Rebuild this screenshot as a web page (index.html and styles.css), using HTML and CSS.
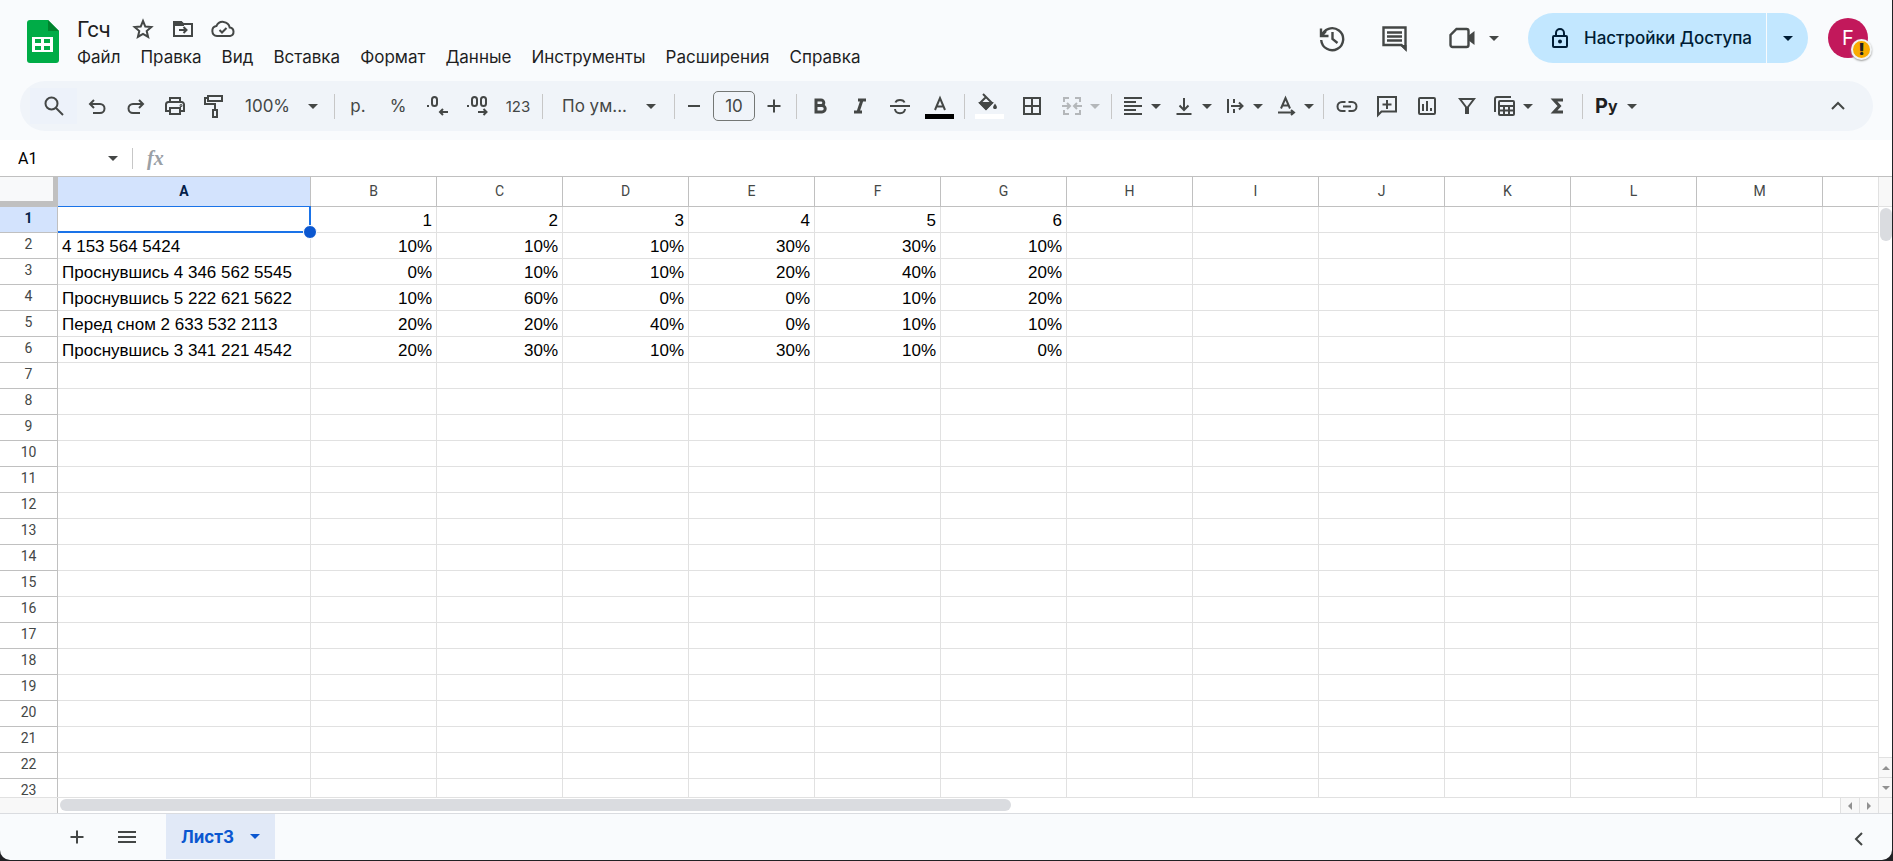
FILE: index.html
```html
<!DOCTYPE html>
<html lang="ru">
<head>
    <meta charset="UTF-8">
    <meta name="viewport" content="width=device-width, initial-scale=1.0">
    <title>Гсч</title>
    <link rel="stylesheet" href="styles.css">
</head>
<body>

    <div class="app">

        <header class="header">
            <svg class="logo" viewBox="0 0 32 43">
                <path d="M3 0h18l11 11v29a3 3 0 0 1-3 3H3a3 3 0 0 1-3-3V3a3 3 0 0 1 3-3z" fill="#00ac47"/>
                <path d="M21 0l11 11H21z" fill="#00832d"/>
                <path d="M5 17h21v15H5zM8 19v4h6v-4zM17 19v4h6v-4zM8 26v4h6v-4zM17 26v4h6v-4z" fill="#fff" fill-rule="evenodd"/>
            </svg>

            <div class="doc">
                <div class="doc-title">
                    <input class="title" type="text" value="Гсч" aria-label="Название">
                    <button class="mini" aria-label="Добавить в помеченные">
                        <svg class="icon" viewBox="0 0 24 24"><path d="M12 4l2.3 5.6 6 .5-4.600 3.900 1.400 5.900L12 16.800l-5.100 3.100 1.400-5.900-4.600-3.900 6-.5z"/></svg>
                    </button>
                    <button class="mini" aria-label="Переместить">
                        <svg class="icon" viewBox="0 0 24 24"><path d="M3 5v14h18V7h-9l-2-2z"/><path d="M3 5h7l2 2v1H3z" fill="currentColor"/><path d="M8 13h7M12.500 10l3 3-3 3"/></svg>
                    </button>
                    <button class="mini" aria-label="Статус документа">
                        <svg class="icon icon-cloud" viewBox="0 0 26 24"><path d="M7 19a5 5 0 0 1-.6-9.900A7 7 0 0 1 19.700 10.500 4.300 4.300 0 0 1 20 19z"/><path d="M9.500 13l2.500 2.500 4.500-4.500"/></svg>
                    </button>
                </div>
                <nav class="menu">
                    <button>Файл</button>
                    <button>Правка</button>
                    <button>Вид</button>
                    <button>Вставка</button>
                    <button>Формат</button>
                    <button>Данные</button>
                    <button>Инструменты</button>
                    <button>Расширения</button>
                    <button>Справка</button>
                </nav>
            </div>

            <div class="actions">
                <button class="action" aria-label="История версий">
                    <svg class="icon icon-big" viewBox="0 0 30 30"><path d="M4.500 13.500A11 11 0 1 1 4.200 17M4 5.500v7.500h7.500M5 12.500L9 8M15.500 9v7l5 4"/></svg>
                </button>
                <button class="action" aria-label="Комментарии">
                    <svg class="icon icon-big" viewBox="0 0 30 30"><path d="M4.500 4.500h22V26l-4-4h-18z"/><path d="M27.500 28l-7-6h7z" fill="currentColor" stroke="none"/><path d="M8 9.500h15M8 13.500h15M8 17.500h15"/></svg>
                </button>
                <button class="action action-meet" aria-label="Видеовстреча">
                    <svg class="icon icon-big" viewBox="0 0 30 30"><path d="M9.500 6h10a2 2 0 0 1 2 2v14a2 2 0 0 1-2 2h-14a2 2 0 0 1-2-2V12z"/><path d="M21 13l6.500-5v14L21 17z" fill="currentColor" stroke="none"/></svg>
                    <span class="caret"></span>
                </button>
                <div class="share">
                    <button class="share-main">
                        <svg class="icon" viewBox="0 0 24 24"><rect x="5" y="10" width="14" height="11" rx="1"/><path d="M8 10V7a4 4 0 0 1 8 0v3"/><circle cx="12" cy="15.500" r="1" fill="currentColor"/></svg>
                        Настройки Доступа
                    </button>
                    <button class="share-more" aria-label="Быстрый доступ"><span class="caret"></span></button>
                </div>
                <button class="avatar" aria-label="Аккаунт">F<span class="badge">!</span></button>
            </div>
        </header>

        <div class="toolbar">
            <button class="tool tool-search" aria-label="Поиск">
                <svg class="icon" viewBox="0 0 24 24"><circle cx="9.500" cy="9.500" r="6"/><path d="M14 14l7 7"/></svg>
            </button>
            <button class="tool tool-narrow" aria-label="Отменить">
                <svg class="icon" viewBox="0 0 24 24"><path d="M8 19h7a4.500 4.500 0 0 0 0-9H5M9 6l-4 4 4 4"/></svg>
            </button>
            <button class="tool tool-narrow" aria-label="Повторить">
                <svg class="icon" viewBox="0 0 24 24"><path d="M16 19H9a4.500 4.500 0 0 1 0-9h10M15 6l4 4-4 4"/></svg>
            </button>
            <button class="tool tool-narrow" aria-label="Печать">
                <svg class="icon" viewBox="0 0 24 24"><path d="M7 8V4h10v4M7 17H3v-6.500A2.500 2.500 0 0 1 5.500 8h13a2.500 2.500 0 0 1 2.500 2.500V17h-4"/><path d="M7 14h10v6H7z"/><circle cx="18" cy="11.500" r=".5"/></svg>
            </button>
            <button class="tool tool-narrow" aria-label="Копировать форматирование">
                <svg class="icon" viewBox="0 0 24 24"><path d="M6 2h14v5H6zM6 4H3v6h10v5M11 16h4v7h-4z"/></svg>
            </button>
            <label class="picker picker-zoom">
                <select aria-label="Масштаб"><option>100%</option></select>
                <span class="caret"></span>
            </label>
            <span class="divider"></span>
            <button class="tool">р.</button>
            <button class="tool">%</button>
            <button class="tool" aria-label="Уменьшить число знаков">
                <svg class="icon" viewBox="0 0 24 24"><rect x="6" y="3" width="5" height="9" rx="2.500"/><path d="M1 12h2M22 18h-8M17 15l-3 3 3 3"/></svg>
            </button>
            <button class="tool" aria-label="Увеличить число знаков">
                <svg class="icon" viewBox="0 0 24 24"><rect x="6" y="3" width="5" height="9" rx="2.500"/><rect x="15" y="3" width="5" height="9" rx="2.500"/><path d="M1 12h2M12 18h8M17.500 15l3 3-3 3"/></svg>
            </button>
            <button class="tool tool-small">123</button>
            <span class="divider"></span>
            <label class="picker picker-font">
                <select aria-label="Шрифт"><option>По ум...</option></select>
                <span class="caret"></span>
            </label>
            <span class="divider"></span>
            <div class="size-group">
                <button class="tool tool-step" aria-label="Уменьшить размер шрифта">
                    <svg class="icon" viewBox="0 0 24 24"><path d="M6 12h12"/></svg>
                </button>
                <input class="size" type="text" value="10" aria-label="Размер шрифта">
                <button class="tool tool-step" aria-label="Увеличить размер шрифта">
                    <svg class="icon" viewBox="0 0 24 24"><path d="M5.500 12h13M12 5.500v13"/></svg>
                </button>
            </div>
            <span class="divider"></span>
            <button class="tool" aria-label="Полужирный">
                <svg class="icon icon-bold" viewBox="0 0 24 24"><path d="M8 6h5a2.800 2.800 0 0 1 0 5.600H8zM8 11.600h6a3.200 3.200 0 0 1 0 6.400H8z"/></svg>
            </button>
            <button class="tool" aria-label="Курсив">
                <svg class="icon icon-bold" viewBox="0 0 24 24"><path d="M10 6h8M6 18h8M14 6l-4 12"/></svg>
            </button>
            <button class="tool" aria-label="Зачеркнутый">
                <svg class="icon" viewBox="0 0 24 24"><path d="M2 12h20M16.500 8.500C15.500 5 8.500 5 7.500 8.500M7 15c.5 5.500 9.500 5.500 10 0"/></svg>
            </button>
            <button class="tool" aria-label="Цвет текста">
                <svg class="icon icon-color" viewBox="0 0 30 30"><path d="M10 19L15 7l5 12M11.500 15.500h7"/><path d="M0 25.500h29" stroke="#000" stroke-width="5"/></svg>
            </button>
            <span class="divider"></span>
            <div class="cell-group">
                <button class="tool" aria-label="Цвет заливки">
                    <svg class="icon icon-color" viewBox="0 0 30 30"><path d="M8 3l9 9-6 6-6-6 6-6"/><path d="M5.500 12h11L11 17.500z" fill="currentColor"/><path d="M20 12.500c3 4 2 5.500 0 5.500s-3-1.500 0-5.500z" fill="currentColor" stroke="none"/><path d="M0 25.500h29" stroke="#fff" stroke-width="5"/></svg>
                </button>
                <button class="tool" aria-label="Границы">
                    <svg class="icon" viewBox="0 0 24 24"><path d="M4 4h16v16H4zM12 4v16M4 12h16"/></svg>
                </button>
                <button class="tool-split" aria-label="Объединить ячейки" disabled>
                    <svg class="icon" viewBox="0 0 24 24"><path d="M9 4H4v4M4 16v4h5M15 4h5v4M20 16v4h-5M2 12h7M7 9l3 3-3 3M22 12h-7M17 9l-3 3 3 3"/></svg>
                    <span class="caret"></span>
                </button>
            </div>
            <span class="divider"></span>
            <button class="tool-split" aria-label="Выравнивание по горизонтали">
                <svg class="icon" viewBox="0 0 24 24"><path d="M3 4h18M3 8h12M3 12h18M3 16h12M3 20h18"/></svg>
                <span class="caret"></span>
            </button>
            <button class="tool-split" aria-label="Выравнивание по вертикали">
                <svg class="icon" viewBox="0 0 24 24"><path d="M12 4v12M7.500 11.500L12 16l4.500-4.500M4.500 20h15"/></svg>
                <span class="caret"></span>
            </button>
            <button class="tool-split" aria-label="Перенос текста">
                <svg class="icon" viewBox="0 0 24 24"><path d="M5 5v14M11 5v4M11 15v4M8 12h11M16 8.500l3.500 3.500-3.500 3.500"/></svg>
                <span class="caret"></span>
            </button>
            <button class="tool-split" aria-label="Поворот текста">
                <svg class="icon" viewBox="0 0 24 24"><path d="M7 14.500L11.500 4 16 14.500M8.500 11.500h6M4 18.500h15M17 16l3 2.500-3 2.500"/></svg>
                <span class="caret"></span>
            </button>
            <span class="divider"></span>
            <button class="tool" aria-label="Вставить ссылку">
                <svg class="icon" viewBox="0 0 24 24"><path d="M10.500 8H7a4.500 4.500 0 0 0 0 9h3.500M13.500 8H17a4.500 4.500 0 0 1 0 9h-3.500M8 12.500h8"/></svg>
            </button>
            <button class="tool" aria-label="Вставить комментарий">
                <svg class="icon" viewBox="0 0 24 24"><path d="M3 21V3h18v14.500H6.500zM12 6v9M7.500 10.500h9"/></svg>
            </button>
            <button class="tool" aria-label="Вставить диаграмму">
                <svg class="icon" viewBox="0 0 24 24"><rect x="4" y="4" width="16" height="16" rx="1"/><path d="M8 10v7M12 7v10M16 14v3"/></svg>
            </button>
            <button class="tool" aria-label="Создать фильтр">
                <svg class="icon" viewBox="0 0 24 24"><path d="M5 5h14l-6 8v6h-2v-6z"/></svg>
            </button>
            <button class="tool-split" aria-label="Представление таблицы">
                <svg class="icon" viewBox="0 0 24 24"><path d="M2 18V5a2 2 0 0 1 2-2h14"/><rect x="6" y="7" width="15" height="14" rx="1"/><path d="M6 12h15M6 16.500h15M11 12v9M16 12v9"/></svg>
                <span class="caret"></span>
            </button>
            <button class="tool" aria-label="Функции">
                <svg class="icon icon-bold" viewBox="0 0 24 24"><path d="M17 6H8l5.500 6L8 18h9"/></svg>
            </button>
            <span class="divider"></span>
            <button class="tool-split tool-py" aria-label="Python">
                <b>P</b><b class="py-y">y</b>
                <span class="caret"></span>
            </button>
            <button class="tool tool-collapse" aria-label="Скрыть меню">
                <svg class="icon" viewBox="0 0 24 24"><path d="M6 15l6-6 6 6"/></svg>
            </button>
        </div>

        <div class="formula-bar">
            <input class="name-box" type="text" value="A1" aria-label="Диапазон">
            <span class="caret"></span>
            <span class="formula-divider"></span>
            <label class="fx" for="formula">fx</label>
            <input id="formula" class="formula" type="text">
        </div>

        <div class="sheet">
            <div class="viewport">
                <table class="grid">
                    <thead>
                        <tr id="columns"><th class="corner"></th></tr>
                    </thead>
                    <tbody id="rows">
                        <!-- Строки добавляет скрипт -->
                    </tbody>
                </table>
            </div>
            <div class="scroll-y">
                <div class="scroll-head"></div>
                <div class="thumb-y"></div>
                <button class="scroll-button" aria-label="Вверх"><span class="arrow arrow-up"></span></button>
                <button class="scroll-button" aria-label="Вниз"><span class="arrow arrow-down"></span></button>
            </div>
            <div class="scroll-x">
                <div class="scroll-left"></div>
                <div class="track-x"><div class="thumb-x"></div></div>
                <button class="scroll-button" aria-label="Влево"><span class="arrow arrow-left"></span></button>
                <button class="scroll-button" aria-label="Вправо"><span class="arrow arrow-right"></span></button>
            </div>
            <div class="scroll-corner"></div>
        </div>

        <footer class="tabs">
            <button class="tab-button" aria-label="Добавить лист">
                <svg class="icon" viewBox="0 0 24 24"><path d="M5.500 12h13M12 5.500v13"/></svg>
            </button>
            <button class="tab-button" aria-label="Все листы">
                <svg class="icon" viewBox="0 0 24 24"><path d="M3 7h18M3 12h18M3 17h18"/></svg>
            </button>
            <button class="tab">Лист3 <span class="caret"></span></button>
            <button class="tab-button tab-panel" aria-label="Показать боковую панель">
                <svg class="icon" viewBox="0 0 24 24"><path d="M15 8l-6 6 6 6"/></svg>
            </button>
        </footer>

    </div>

    <script>

        const columns = document.getElementById("columns");
        const rows = document.getElementById("rows");

        const letters = ["A", "B", "C", "D", "E", "F", "G", "H", "I", "J", "K", "L", "M", ""];
        const data = [
            ["", "1", "2", "3", "4", "5", "6"],
            ["4 153 564 5424", "10%", "10%", "10%", "30%", "30%", "10%"],
            ["Проснувшись 4 346 562 5545", "0%", "10%", "10%", "20%", "40%", "20%"],
            ["Проснувшись 5 222 621 5622", "10%", "60%", "0%", "0%", "10%", "20%"],
            ["Перед сном 2 633 532 2113", "20%", "20%", "40%", "0%", "10%", "10%"],
            ["Проснувшись 3 341 221 4542", "20%", "30%", "10%", "30%", "10%", "0%"]
        ];

        for( var letter of letters ) {
            const th = document.createElement("th");
            th.textContent = letter;
            columns.appendChild(th);
        }
        columns.children[1].className = "col-a selected";
        columns.lastChild.className = "col-rest";

        for( var r = 0; r < 23; r++ ) {
            const tr = document.createElement("tr");
            const th = document.createElement("th");
            th.textContent = r + 1;
            tr.appendChild(th);

            for( var c = 0; c < letters.length; c++ ) {
                const td = document.createElement("td");
                td.textContent = data[r] && data[r][c] ? data[r][c] : "";
                tr.appendChild(td);
            }
            rows.appendChild(tr);
        }

        // Активная ячейка A1
        rows.rows[0].cells[0].className = "selected";
        rows.rows[0].cells[1].className = "active";

    </script>

</body>
</html>
```
FILE: styles.css
```css
* {
    box-sizing: border-box;
}

body {
    margin: 0;
    background-color: #202124;
    font-family: Inter, Roboto, sans-serif;
    color: #1f1f1f;
}

button, input, select {
    margin: 0;
    padding: 0;
    border: none;
    background: none;
    font: inherit;
    color: inherit;
}

button {
    display: flex;
    align-items: center;
    justify-content: center;
    flex-shrink: 0;
}

.app {
    display: flex;
    flex-direction: column;
    height: calc(100vh - 1px);
    margin-right: 1px;
    background-color: #f9fbfd;
    border-radius: 0 0 10px 10px;
    overflow: hidden;
}

.icon {
    width: 24px;
    height: 24px;
    fill: none;
    stroke: currentColor;
    stroke-width: 2;
    flex-shrink: 0;
}
.icon-big {
    width: 30px;
    height: 30px;
    stroke-width: 2.4;
}
.icon-cloud {
    width: 26px;
}
.icon-color {
    width: 30px;
    height: 30px;
}
.icon-bold {
    stroke-width: 3;
}

.caret {
    border: 5px solid transparent;
    border-top-color: currentColor;
    border-bottom: none;
    flex-shrink: 0;
}

/* Header */
.header {
    display: flex;
    padding: 13px 24px 0 27px;
    height: 81px;
}
.logo {
    width: 32px;
    height: 43px;
    margin-top: 7px;
    flex-shrink: 0;
}
.doc {
    margin-left: 18px;
}
.doc-title {
    display: flex;
    align-items: center;
    height: 32px;
}
.title {
    width: 46px;
    font-family: Roboto, sans-serif;
    font-size: 22px;
}
.mini {
    width: 40px;
    height: 32px;
    color: #444746;
}
.menu {
    display: flex;
    gap: 20px;
    height: 24px;
    font-size: 17px;
}
.actions {
    display: flex;
    align-items: center;
    height: 50px;
    margin-left: auto;
    color: #444746;
}
.action {
    width: 62px;
    height: 50px;
}
.action-meet {
    width: 84px;
    gap: 12px;
    margin: 0 13px 0 6px;
}
.share {
    display: flex;
    height: 50px;
    gap: 1px;
    margin-right: 20px;
    color: #001d35;
}
.share button {
    background-color: #c2e7ff;
}
.share-main {
    gap: 12px;
    padding: 0 14px 0 20px;
    border-radius: 25px 0 0 25px;
    font-size: 17px;
    font-weight: 500;
}
.share-more {
    width: 41px;
    border-radius: 0 25px 25px 0;
}
.avatar {
    position: relative;
    width: 40px;
    height: 40px;
    border-radius: 50%;
    background-color: #c2185b;
    color: #fff;
    font-size: 20px;
}
.badge {
    position: absolute;
    right: -4px;
    bottom: -2px;
    width: 21px;
    height: 21px;
    border: 2px solid #f1f3f4;
    border-radius: 50%;
    background-color: #f9ab00;
    box-shadow: 0 1px 2px #999;
    color: #202124;
    font-size: 16px;
    font-weight: 900;
    line-height: 17px;
}

/* Toolbar */
.toolbar {
    display: flex;
    align-items: center;
    height: 50px;
    margin: 0 19px 9px 20px;
    padding: 0 15px 0 10px;
    border-radius: 25px;
    background-color: #f0f4f9;
    color: #444746;
    font-size: 17px;
    flex-shrink: 0;
}
.tool {
    width: 40px;
    height: 36px;
}
.tool-search {
    width: 47px;
    background-color: #edf2fa;
}
.tool-narrow {
    width: 39px;
}
.tool-small {
    font-size: 15px;
}
.tool-step {
    width: 32px;
}
.tool-split {
    width: 51px;
    height: 36px;
    gap: 6px;
}
.tool-split:disabled {
    color: #b4b7ba;
}
.tool-py {
    width: 64px;
    gap: 0;
    justify-content: flex-start;
    padding-left: 9px;
    color: #1f1f1f;
    font-size: 20px;
}
.tool-py .py-y {
    font-size: 16px;
}
.tool-py .caret {
    margin-left: 9px;
    color: #444746;
}
.tool-collapse {
    margin-left: auto;
}
.divider {
    width: 1px;
    height: 25px;
    margin: 0 3px 0 4px;
    background-color: #c7c7c7;
    flex-shrink: 0;
}
.picker {
    display: flex;
    align-items: center;
    flex-shrink: 0;
}
.picker select {
    flex: 1;
    min-width: 0;
    appearance: none;
}
.picker-zoom {
    width: 97px;
    padding: 0 12px;
}
.picker-font {
    width: 124px;
    padding: 0 14px 0 16px;
}
.size-group {
    display: flex;
    align-items: center;
    gap: 3px;
    padding-right: 2px;
}
.size {
    width: 42px;
    height: 30px;
    border: 1px solid #747775;
    border-radius: 5px;
    text-align: center;
}
.cell-group {
    display: flex;
    gap: 2px;
    padding: 0 2px;
}

/* Formula bar */
.formula-bar {
    display: flex;
    align-items: center;
    height: 36px;
    padding-left: 18px;
    background-color: #fff;
    flex-shrink: 0;
}
.formula-bar .caret {
    color: #444746;
}
.name-box {
    width: 90px;
    font-family: Roboto, sans-serif;
    font-size: 16px;
    color: #000;
}
.formula-divider {
    width: 1px;
    height: 21px;
    margin: 0 14px;
    background-color: #c7c7c7;
}
.fx {
    font-family: "Liberation Serif", serif;
    font-size: 20px;
    font-style: italic;
    font-weight: bold;
    color: #9aa0a6;
}
.formula {
    flex: 1;
    margin-left: 12px;
}

/* Sheet */
.sheet {
    display: grid;
    grid-template-columns: 1fr 14px;
    grid-template-rows: 1fr 16px;
    flex: 1;
    min-height: 0;
    border-top: 1px solid #c0c0c0;
    background-color: #fff;
}
.viewport {
    overflow: hidden;
    min-height: 0;
}
.grid {
    width: 100%;
    table-layout: fixed;
    border-collapse: separate;
    border-spacing: 0;
}
.grid tr {
    height: 26px;
}
.grid thead tr {
    height: 30px;
}
.grid th {
    width: 126px;
    padding: 0 0 2px;
    border-right: 1px solid #c0c0c0;
    border-bottom: 1px solid #c0c0c0;
    font-family: Roboto, sans-serif;
    font-size: 14px;
    font-weight: 400;
    line-height: 16px;
    color: #444746;
}
.grid tbody th {
    padding-bottom: 4px;
}
.grid .corner {
    width: 58px;
    border-right: 5px solid #c0c0c0;
    border-bottom: 6px solid #c0c0c0;
    background-color: #f8f9fa;
}
.grid .col-a {
    width: 253px;
}
.grid .col-rest {
    width: auto;
    border-right: none;
}
.grid .selected {
    background-color: #d3e3fd;
    color: #041e49;
    font-weight: 700;
}
.grid td {
    padding: 2px 4px 0;
    border-right: 1px solid #e1e1e1;
    border-bottom: 1px solid #e1e1e1;
    font-family: "Liberation Sans", Arial, sans-serif;
    font-size: 17px;
    line-height: 20px;
    text-align: right;
    white-space: nowrap;
    color: #000;
}
.grid td:nth-child(2) {
    text-align: left;
}
.grid td:last-child {
    border-right: none;
}
.grid .active {
    position: relative;
    border-right: 2px solid #1a73e8;
    border-bottom: 2px solid #1a73e8;
    box-shadow: 0 -1px #1a73e8;
}
.grid .active::after {
    content: "";
    position: absolute;
    right: -8px;
    bottom: -8px;
    width: 12px;
    height: 12px;
    border: 1px solid #fff;
    border-radius: 50%;
    background-color: #0b57d0;
}

.scroll-y {
    display: flex;
    flex-direction: column;
    border-left: 1px solid #e1e1e1;
}
.scroll-head {
    height: 30px;
    border-bottom: 1px solid #e1e1e1;
    background-color: #f8f8f8;
}
.thumb-y {
    height: 33px;
    margin: 1px 0 auto 1px;
    border-radius: 6px;
    background-color: #dadce0;
}
.scroll-button {
    width: 19px;
    border-left: 1px solid #e1e1e1;
    background-color: #f8f8f8;
}
.scroll-y .scroll-button {
    width: 100%;
    height: 20px;
    border-left: none;
    border-top: 1px solid #e1e1e1;
}
.arrow {
    border: 4px solid transparent;
}
.arrow-up {
    border-bottom-color: #919191;
    border-top: none;
}
.arrow-down {
    border-top-color: #919191;
    border-bottom: none;
}
.arrow-left {
    border-right-color: #919191;
    border-left: none;
}
.arrow-right {
    border-left-color: #919191;
    border-right: none;
}
.scroll-x {
    display: flex;
    border-top: 1px solid #e1e1e1;
}
.scroll-left {
    width: 58px;
    border-right: 1px solid #c0c0c0;
    background-color: #f8f8f8;
}
.track-x {
    flex: 1;
    padding: 1px 2px;
}
.thumb-x {
    width: 53.5%;
    height: 12px;
    border-radius: 6px;
    background-color: #dadce0;
}
.scroll-corner {
    border: 1px solid #e1e1e1;
    border-width: 1px 0 0 1px;
    background-color: #f8f8f8;
}

/* Sheet tabs */
.tabs {
    display: flex;
    align-items: center;
    height: 47px;
    padding: 0 8px 0 52px;
    border-top: 1px solid #dadce0;
    color: #444746;
    flex-shrink: 0;
}
.tab-button {
    width: 50px;
    height: 46px;
}
.tab {
    gap: 16px;
    height: 45px;
    margin-left: 14px;
    padding: 0 15px;
    align-self: flex-start;
    background-color: #e1e9f7;
    color: #0b57d0;
    font-size: 17px;
    font-weight: 700;
}
.tab-panel {
    margin-left: auto;
}
```
